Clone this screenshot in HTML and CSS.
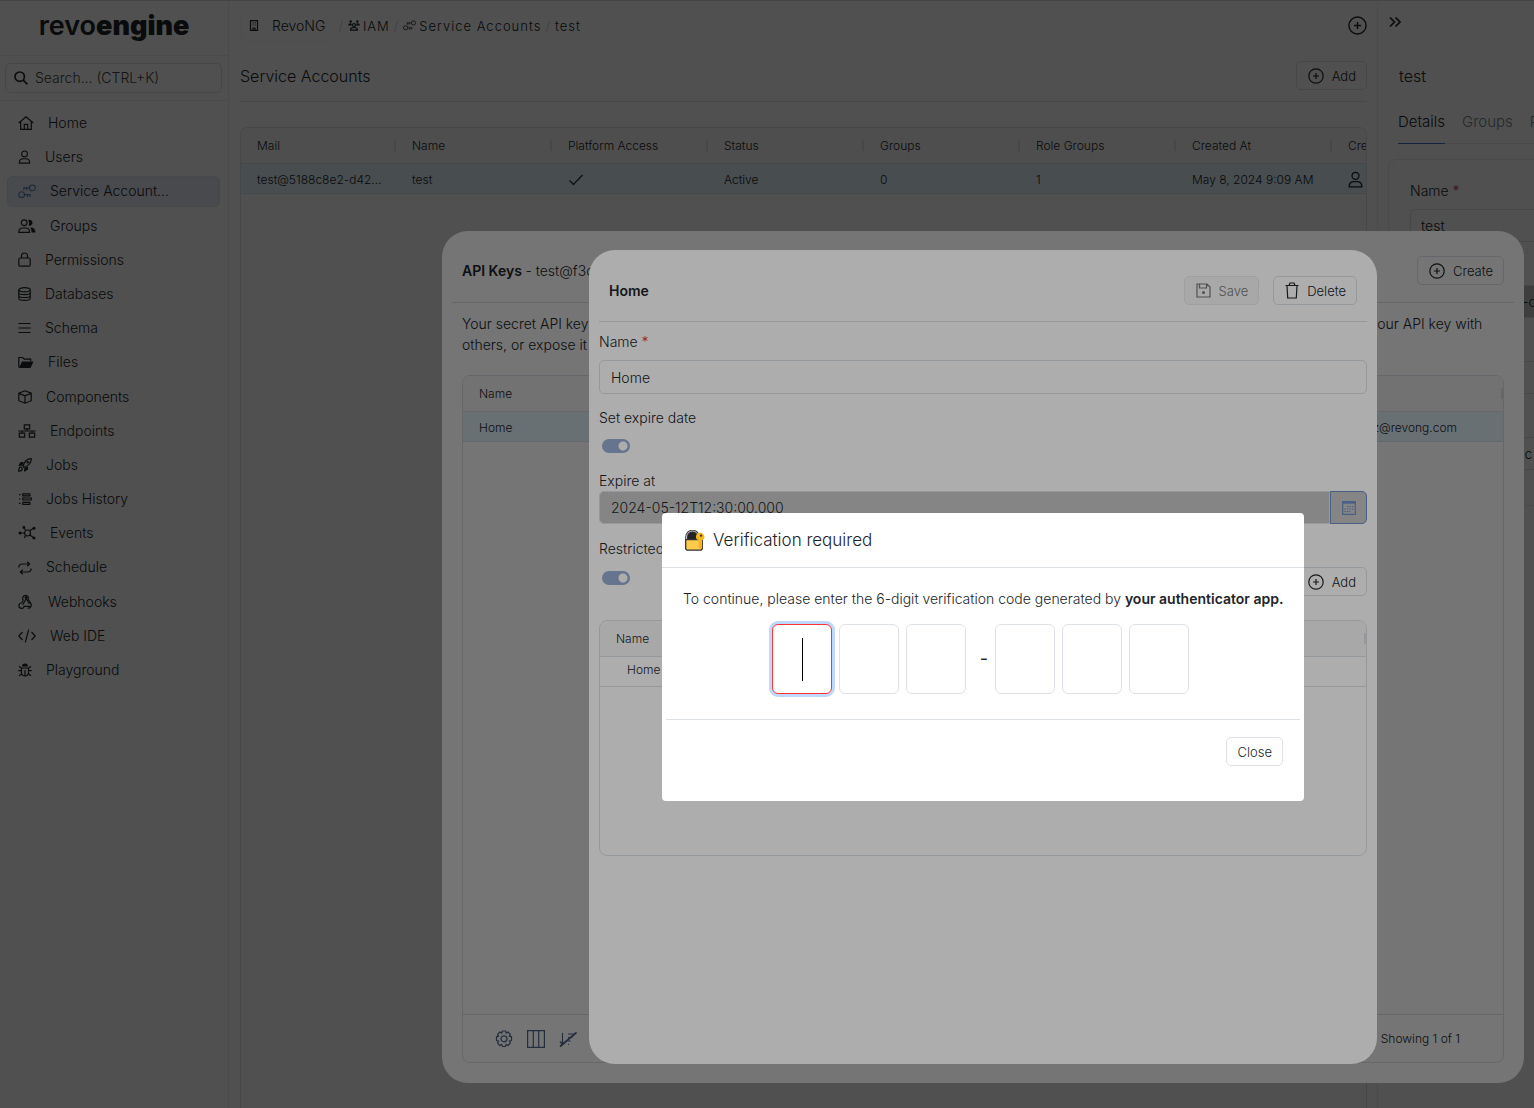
FILE: index.html
```html
<!DOCTYPE html>
<html lang="en">
<head>
<meta charset="utf-8">
<meta name="viewport" content="width=device-width, initial-scale=1">
<title>revoengine - Service Accounts</title>
<link rel="stylesheet" href="styles.css">
</head>
<body>
<svg class="sprite" aria-hidden="true">
  <symbol id="plus" viewBox="0 0 16 16"><circle cx="8" cy="8" r="7.2"/><path d="M8 5v6M5 8h6"/></symbol>
  <symbol id="user" viewBox="0 0 14 16"><circle cx="7" cy="4.5" r="3.3"/><path d="M1 15c0-3.200 1.800-5 4.500-5h3c2.700 0 4.500 1.800 4.500 5z"/></symbol>
  <symbol id="keys" viewBox="0 0 20 16"><circle cx="4" cy="11.500" r="3.200"/><path d="M7.200 11.500H14M10.500 11.500v3M13.500 11.500v2.500"/><circle cx="16" cy="4" r="3.200"/><path d="M12.800 4H6M6.500 4v3M9.500 4v2.500"/></symbol>
</svg>

<div class="app">
  <aside class="sidebar">
    <div class="logo">revo<b>engine</b></div>
    <div class="search-row">
      <label class="search">
        <svg width="14" height="14" viewBox="0 0 14 14" class="ico heavy"><circle cx="5.700" cy="5.700" r="4.700"/><path d="M9.200 9.200l4.200 4.200"/></svg>
        <input type="search" placeholder="Search... (CTRL+K)" aria-label="Search">
      </label>
    </div>
    <nav class="nav" aria-label="Main">
      <a href="#"><svg class="ico" width="16" height="14" viewBox="0 0 16 14"><path d="M.7 7L8 .8 15.300 7M2.700 5.500v7.800h10.600V5.500M6.300 13V8.300h3.400V13"/></svg>Home</a>
      <a href="#"><svg class="ico" width="13" height="14"><use href="#user"/></svg>Users</a>
      <a href="#" class="active" aria-current="page"><svg class="ico" width="18" height="15"><use href="#keys"/></svg>Service Account...</a>
      <a href="#"><svg class="ico" width="18" height="14" viewBox="0 0 18 14"><circle cx="6.200" cy="3.700" r="2.900"/><path d="M.8 13.300c0-2.800 1.500-4.300 4-4.300h2.800c2.500 0 4 1.500 4 4.300z"/><path class="fill" d="M10 .9c3-.8 4.500 1 4.500 2.900s-1.800 3.500-4 2.800c1-1.800.9-4-.5-5.700zM12 8.500c3.500-.2 5.500 1.700 5.500 5h-4c0-2-.5-3.700-1.500-5z"/></svg>Groups</a>
      <a href="#"><svg class="ico" width="13" height="15" viewBox="0 0 13 15"><rect x=".8" y="6" width="11.400" height="8.200" rx="1.500"/><path d="M3.500 6V4a3 3 0 016 0v2"/></svg>Permissions</a>
      <a href="#"><svg class="ico" width="13" height="14" viewBox="0 0 13 14"><ellipse cx="6.500" cy="2.800" rx="5.700" ry="2.100"/><path d="M.8 2.800v8.400c0 2.800 11.400 2.800 11.400 0V2.800M.8 5.600c0 2.800 11.400 2.800 11.400 0M.8 8.400c0 2.800 11.400 2.800 11.400 0"/></svg>Databases</a>
      <a href="#"><svg class="ico" width="13" height="12" viewBox="0 0 13 12"><path d="M.5 1.500h12M.5 6h12M.5 10.500h12"/></svg>Schema</a>
      <a href="#"><svg class="ico" width="16" height="13" viewBox="0 0 16 13"><path d="M.8 11.500V1.500h4l1.500 1.700h6.400v2"/><path class="fill" d="M4 5.500h11.500L12.500 12H1z"/></svg>Files</a>
      <a href="#"><svg class="ico" width="14" height="14" viewBox="0 0 14 14"><path d="M7 .8l6.200 2.400v7.500L7 13.200.8 10.700V3.200zM.8 3.400L7 5.800l6.200-2.400M7 5.800v7.200"/></svg>Components</a>
      <a href="#"><svg class="ico" width="18" height="14" viewBox="0 0 18 14"><path d="M6.300.8h5.400v4H6.300zM1.300 9.200h5.400v4H1.300zM11.300 9.200h5.400v4h-5.400zM9 5v2M.3 7h17.400M4 7v2M14 7v2"/></svg>Endpoints</a>
      <a href="#"><svg class="ico" width="14" height="14" viewBox="0 0 14 14"><path d="M5 8.500C6 4 8.500.8 13.300.7 13.300 5.500 10 8 5.700 9.300z"/><circle cx="9.700" cy="4.300" r=".7"/><path class="fill" d="M5.500 4H2.500L.3 8l4-.3zM10 8.500v3L6 14l.3-4.300z"/><path d="M1.500 9.500c1.500-1 3.500 1 2.500 2.500-.8.900-2 1.200-3.300 1.200 0-1.300 0-3 .8-3.700z"/></svg>Jobs</a>
      <a href="#"><svg class="ico" width="14" height="14" viewBox="0 0 14 14"><path d="M4.800 1.800h7v2h-7zM4.800 6h8.500v2H4.800zM4.800 10.300h7v2h-7zM1 2.700h1.500M1 7h1.500M1 11.300h1.500"/></svg>Jobs History</a>
      <a href="#"><svg class="ico" width="18" height="14" viewBox="0 0 18 14"><circle cx="9.500" cy="7" r="3"/><path d="M2 7h4.500M6 2l1.800 2.500M11.500 4.800L16 2M12 9l4 3M7.500 9.500L6.500 12"/><path class="fill" d="M.5 7a1.500 1.500 0 013 0 1.500 1.500 0 01-3 0zM4.500 1.500a1.400 1.400 0 012.800 0 1.400 1.400 0 01-2.800 0zM14.500 2.300a1.500 1.500 0 013 0 1.500 1.500 0 01-3 0zM14.500 12a1.500 1.500 0 013 0 1.500 1.500 0 01-3 0z"/></svg>Events</a>
      <a href="#"><svg class="ico" width="14" height="14" viewBox="0 0 14 14"><path d="M.8 6.500C.8 4 2.500 3 4.500 3h7M9.200.7L11.600 3 9.200 5.300M13.200 7.500c0 2.500-1.700 3.500-3.700 3.500h-7M4.800 8.700L2.400 11l2.400 2.300"/></svg>Schedule</a>
      <a href="#"><svg class="ico" width="16" height="14" viewBox="0 0 16 14"><path d="M5.400 5.500a3 3 0 115.200-2M8 3.500l3.300 5.200M8 3.500a.8.800 0 11.100 0L4.800 9.800"/><path d="M5.400 5.500L3.500 8a2.700 2.700 0 102.700 3.300h6M11.300 7.700a2.700 2.700 0 11-1.500 5.200M9.500 3.500l3.200 4.300"/></svg>Webhooks</a>
      <a href="#"><svg class="ico" width="18" height="14" viewBox="0 0 18 14"><path d="M4.500 3L.8 7l3.700 4M13.500 3l3.700 4-3.700 4M10.700.7L7.300 13.300"/></svg>Web IDE</a>
      <a href="#"><svg class="ico" width="14" height="14" viewBox="0 0 14 14"><path class="fill" d="M4 3.500a3 3 0 016 0z"/><path d="M3.500 5h7v4.500a3.500 3.500 0 01-7 0zM7 7v6M.3 7.700h3M10.700 7.700h3M1 3.300l2.500 2M13 3.300l-2.500 2M1 12.700l2.700-2M13 12.700l-2.700-2"/></svg>Playground</a>
    </nav>
  </aside>

  <main class="main">
    <header class="topbar">
      <nav class="crumbs" aria-label="Breadcrumb">
        <a href="#" class="tenant"><svg class="ico" width="10" height="11" viewBox="0 0 10 11"><path d="M1.500.6h7v9.800h-7zM4 10V8h2v2M3.500 2.800h1M5.700 2.800h1M3.500 5h1M5.700 5h1"/></svg>RevoNG</a>
        <span class="slash">/</span>
        <a href="#"><svg class="ico" width="12" height="11" viewBox="0 0 12 11"><path class="fill" d="M1.500 1.500a1.200 1.200 0 012.400 0 1.200 1.200 0 01-2.400 0zM8.100 1.500a1.200 1.200 0 012.400 0 1.200 1.200 0 01-2.400 0zM.2 5.500c0-2 1-2.300 3-2.300l.8 2.300zM11.800 5.500c0-2-1-2.300-3-2.300L8 5.500z"/><circle cx="6" cy="5" r="1.500"/><path d="M2.500 10.200c0-2 1-2.700 3.500-2.700s3.500.7 3.500 2.700z"/></svg>IAM</a>
        <span class="slash">/</span>
        <a href="#"><svg class="ico" width="13" height="11"><use href="#keys"/></svg>Service Accounts</a>
        <span class="slash">/</span>
        <a href="#">test</a>
      </nav>
      <button type="button" class="icon-btn" aria-label="New"><svg class="ico" width="19" height="19"><use href="#plus"/></svg></button>
    </header>
    <div class="page-head">
      <h1>Service Accounts</h1>
      <button type="button" class="btn"><svg class="ico" width="16" height="16"><use href="#plus"/></svg>Add</button>
    </div>
    <div class="grid-box accounts">
      <table class="grid">
        <thead><tr><th>Mail</th><th>Name</th><th>Platform Access</th><th>Status</th><th>Groups</th><th>Role Groups</th><th>Created At</th><th>Created By</th></tr></thead>
        <tbody><tr class="selected"><td>test@5188c8e2-d42...</td><td>test</td><td><svg class="ico" width="16" height="12" viewBox="0 0 16 12" role="img" aria-label="Yes"><path d="M1.500 6.500l4 4L14.500 1"/></svg></td><td>Active</td><td>0</td><td>1</td><td>May 8, 2024 9:09 AM</td><td><svg class="ico" width="15" height="17"><use href="#user"/></svg></td></tr></tbody>
      </table>
    </div>
  </main>

  <section class="panel" aria-label="Details">
    <button type="button" class="icon-btn collapse" aria-label="Collapse"><svg class="ico heavy" width="12" height="12" viewBox="0 0 12 12"><path d="M1 1.500L5.500 6 1 10.500M6.500 1.500L11 6l-4.500 4.500"/></svg></button>
    <h2>test</h2>
    <div class="tabs">
      <a href="#" class="current">Details</a><a href="#">Groups</a><a href="#">Permissions</a>
    </div>
    <div class="card">
      <label for="acc-name">Name <i>*</i></label>
      <input id="acc-name" class="field" value="test">
      <label for="acc-mail">Mail</label>
      <input id="acc-mail" class="field" value="test@5188c8e2-d42" disabled>
      <label for="acc-desc">Description</label>
      <input id="acc-desc" class="field">
      <label for="acc-key">Keys</label>
      <button type="button" id="acc-key" class="field">Rotate this public key</button>
    </div>
  </section>
</div>

<div class="overlay">
  <section class="dialog keys" role="dialog" aria-label="API Keys">
    <header class="dialog-head">
      <h2>API Keys <span>- test@f3c1</span></h2>
      <button type="button" class="btn"><svg class="ico" width="16" height="16"><use href="#plus"/></svg>Create</button>
    </header>
    <div class="keys-body">
      <p>Your secret API keys are listed below. Please note that we do not disclose your secret API keys again after you generate them. Do not share your API key with others, or expose it in the browser or other client-side code.</p>
      <div class="grid-box">
        <table class="grid wide">
          <thead><tr><th>Name</th><th>Created By</th></tr></thead>
          <tbody><tr class="selected"><td>Home</td><td class="mail">lukasz@revong.com</td></tr></tbody>
        </table>
        <footer class="grid-foot">
          <div class="tools">
            <button type="button" class="icon-btn" aria-label="Settings"><svg class="ico" width="18" height="18" viewBox="0 0 18 18"><path d="M7.300 1h3.400l.5 2 1.800-1 2.300 2.300-1 1.900 2.200.6v3.800l-2.200.5 1 2-2.300 2.300-1.900-1-.6 2.100H7.300l-.6-2.100-1.900 1-2.200-2.300 1-2-2.100-.5V6.800l2.100-.6-1-1.900L4.900 2l1.900 1z"/><circle cx="9" cy="8.800" r="3"/></svg></button>
            <button type="button" class="icon-btn" aria-label="Columns"><svg class="ico" width="18" height="18" viewBox="0 0 18 18"><path d="M.6.600h16.800v16.800H.6zM6.300.6v16.800M11.700.6v16.800"/></svg></button>
            <button type="button" class="icon-btn" aria-label="Clear sorting"><svg class="ico" width="18" height="18" viewBox="0 0 18 18"><path d="M3.500 3v11M1 11.500L3.500 14.500 6 12M9 4h7M9 7.500h4.500M9 11h2.500M9 14.500h1"/><path stroke-width="1.800" d="M1 16.500L17.500 2.500"/></svg></button>
          </div>
          <span>Showing 1 of 1</span>
        </footer>
      </div>
    </div>
  </section>
</div>

<div class="overlay">
  <section class="dialog edit" role="dialog" aria-label="Home">
    <header class="dialog-head">
      <h2>Home</h2>
      <div class="actions">
        <button type="button" class="btn" disabled><svg class="ico" width="15" height="15" viewBox="0 0 15 15"><path d="M1 1h10l3 3v10H1zM3.500 1v4h7V1"/><circle cx="7.500" cy="9.500" r="1.500" class="fill"/></svg>Save</button>
        <button type="button" class="btn"><svg class="ico" width="14" height="17" viewBox="0 0 14 17"><path d="M.5 3.500h13M4 3.500l1-2.500h4l1 2.500M2 3.500L2.700 16h8.600L12 3.500"/></svg>Delete</button>
      </div>
    </header>
    <form class="edit-form">
      <label for="key-name">Name <i>*</i></label>
      <input id="key-name" class="field" value="Home">
      <label for="has-expire">Set expire date</label>
      <input id="has-expire" class="switch" type="checkbox" checked>
      <label for="expire">Expire at</label>
      <div class="date">
        <input id="expire" class="field" value="2024-05-12T12:30:00.000" disabled>
        <button type="button" aria-label="Pick a date"><svg width="14" height="14" viewBox="0 0 14 14" class="ico"><path d="M.7.700h12.600v12.600H.7z"/><path class="fill" d="M.7.700h12.600v2H.7z"/><path class="dots" d="M5 5.500h7M2.500 8h9M2.500 10.500h6"/></svg></button>
      </div>
      <label for="restricted">Restricted access</label>
      <div class="restricted">
        <input id="restricted" class="switch" type="checkbox" checked>
        <button type="button" class="btn"><svg class="ico" width="16" height="16"><use href="#plus"/></svg>Add</button>
      </div>
      <div class="grid-box scopes">
        <table class="grid single">
          <thead><tr><th>Name</th></tr></thead>
          <tbody><tr><td class="indent">Home</td></tr></tbody>
        </table>
      </div>
    </form>
  </section>
</div>

<div class="overlay">
  <section class="modal" role="dialog" aria-modal="true" aria-labelledby="verify-title">
    <header>
      <svg width="21" height="21" viewBox="0 0 21 21" aria-hidden="true"><path d="M3 9.500V7a5.500 5.500 0 0111 0v2.500z" fill="#222"/><path d="M2.500 9V7a6 6 0 0112 0v2" fill="none" stroke="#333" stroke-width="2.600"/><path d="M2.500 9V7a6 6 0 0112 0v2" fill="none" stroke="#ccc" stroke-width="1"/><path d="M1.700 9.700h16.600v9.300l-1.300 1.200H3L1.700 19z" fill="#ffcb4c" stroke="#333" stroke-width="1.300"/><path d="M16 2.700c2.700 0 4.400 1.800 4.400 4 0 1.700-1 2.900-2.300 3.600v7.400l-1.900 1.300-1.600-1.500v-7.200c-1.600-.7-2.700-2-2.700-3.600 0-2.200 1.700-4 4.100-4z" fill="#f5b51e"/><circle cx="17" cy="5.700" r="1.100" fill="#333"/></svg>
      <h2 id="verify-title">Verification required</h2>
    </header>
    <div class="verify">
      <p>To continue, please enter the 6-digit verification code generated by <b>your authenticator app.</b></p>
      <div class="otp">
        <label class="focus"><input inputmode="numeric" maxlength="1" aria-label="Digit 1"></label>
        <label><input inputmode="numeric" maxlength="1" aria-label="Digit 2"></label>
        <label><input inputmode="numeric" maxlength="1" aria-label="Digit 3"></label>
        <span>-</span>
        <label><input inputmode="numeric" maxlength="1" aria-label="Digit 4"></label>
        <label><input inputmode="numeric" maxlength="1" aria-label="Digit 5"></label>
        <label><input inputmode="numeric" maxlength="1" aria-label="Digit 6"></label>
      </div>
    </div>
    <footer><button type="button" class="btn">Close</button></footer>
  </section>
</div>
</body>
</html>
```
FILE: styles.css
```css
:root {
  --text: #212529;
  --line: #dee2e6;
  --faint: #f0f0f2;
  --accent: #6d8cc4;
}
* { box-sizing: border-box; }
body {
  margin: 0;
  height: 100vh;
  overflow: hidden;
  font: 300 14px/20px Inter, sans-serif;
  color: var(--text);
  background: #fff;
}
h1, h2, p { margin: 0; font-weight: inherit; }
a { color: inherit; text-decoration: none; }
button, input { font: inherit; color: inherit; }
button { cursor: pointer; }
label i { color: #dc3545; font-style: normal; }

.sprite { display: none; }
.ico { flex: none; fill: none; stroke: currentColor; stroke-width: 1.2; }
.ico .fill { fill: currentColor; stroke: none; }
.ico.heavy { stroke-width: 1.7; }
.icon-btn { display: flex; padding: 0; border: 0; background: none; }
.btn {
  display: inline-flex;
  align-items: center;
  gap: 8px;
  height: 29px;
  padding: 0 10px 0 11px;
  border: 1px solid var(--line);
  border-radius: 5px;
  background: none;
  font-size: 13px;
}
.btn:disabled { color: #777; background: #f8f8f8; border-color: #ebebeb; }

/* Application shell */
.app {
  display: grid;
  grid-template-columns: 229px minmax(0, 1fr) 157px;
  height: 100%;
  border-top: 1px solid #d8d8d8;
}
.sidebar { border-right: 1px solid var(--faint); }
.logo {
  height: 55px;
  padding-top: 9px;
  border-bottom: 1px solid var(--faint);
  font-size: 27px;
  line-height: 32px;
  font-weight: 600;
  text-align: center;
}
.search-row { padding: 7px 6px 7px 5px; border-bottom: 1px solid var(--faint); }
.search {
  display: flex;
  align-items: center;
  gap: 7px;
  height: 30px;
  padding: 0 8px;
  border: 1px solid var(--line);
  border-radius: 5px;
}
.search input { flex: 1; min-width: 0; padding: 0; border: 0; outline: 0; background: none; }
.search input::placeholder { color: #444; }
.nav { display: flex; flex-direction: column; gap: 4px; padding: 7px 8px 7px 7px; line-height: 1.3; }
.nav a { display: flex; align-items: center; gap: 14px; padding: 5px 10px; border: 1px solid transparent; border-radius: 5px; }
.nav a.active { background: #e8ecf8; border-color: #e0e4f0; }
.nav a.active svg { color: #5b83b8; }

.main { display: flex; flex-direction: column; padding: 0 10px 0 11px; min-width: 0; }
.topbar { display: flex; justify-content: space-between; align-items: center; height: 49px; }
.crumbs { display: flex; align-items: center; gap: 4px; font-size: 13px; letter-spacing: 1px; }
.crumbs a { display: flex; align-items: center; gap: 3px; }
.crumbs .tenant { gap: 13px; padding: 4px 8px; border: 1px solid #f8f8f8; border-radius: 8px; font-size: 14px; letter-spacing: 0; }
.slash { color: #ccc; }
.page-head { display: flex; justify-content: space-between; align-items: center; height: 52px; border-bottom: 1px solid var(--line); }
h1, .panel h2 { font-size: 16px; }

/* Data grids */
.grid-box { display: flex; flex-direction: column; border: 1px solid var(--line); border-radius: 8px; overflow: hidden; }
.accounts { flex: 1; margin-top: 25px; border-bottom: 0; border-radius: 8px 8px 0 0; }
.grid { width: 1247px; table-layout: fixed; border-collapse: separate; border-spacing: 0; font-size: 12px; }
.accounts th:first-child { width: 155px; }
.grid.wide, .grid.single { width: 100%; }
.grid th, .grid td { padding: 0 0 0 16px; text-align: left; font-weight: inherit; white-space: nowrap; border-bottom: 1px solid var(--line); }
.grid th { position: relative; height: 36px; background: #f8f8f8; }
.grid th::after { content: ""; position: absolute; right: 0; top: 12px; width: 2px; height: 11px; background: var(--line); }
.grid td { height: 30px; padding-top: 2px; }
.grid td svg { display: block; }
.grid .selected { background: #e5f4fd; }
.grid .indent { padding: 0 0 3px 27px; }
.grid .mail { text-align: right; padding-right: 46px; }
.wide th:first-child::after { display: none; }

/* Details panel */
.panel { border-left: 1px solid var(--faint); overflow: hidden; padding-left: 10px; white-space: nowrap; }
.collapse { padding: 15px 1px; }
.panel h2 { padding: 21px 11px 0; line-height: 24px; }
.tabs { display: flex; gap: 17px; width: 300px; margin-left: 10px; padding-top: 24px; border-bottom: 1px solid #e8e8e8; color: #7a8291; font-size: 15px; }
.tabs a { padding: 0 0 11px; margin-bottom: -1px; border-bottom: 1px solid transparent; }
.tabs .current { color: var(--text); border-color: #4070d0; }
.card { display: flex; flex-direction: column; width: 300px; margin-top: 15px; padding: 21px 21px 35px; border: 1px solid #ececec; border-radius: 8px; }
.card label:not(:first-child) { margin-top: 15px; }
.field { width: 100%; height: 34px; padding: 0 11px; border: 1px solid var(--line); border-radius: 5px; background: none; text-align: left; }
.field:disabled { background: #c5c5c5; color: inherit; }
.card .field { flex: none; height: 33px; margin-top: 8px; padding: 0 10px; }

/* Stacked dialogs: every layer dims what lies below */
.overlay {
  position: fixed;
  inset: 0;
  display: flex;
  align-items: center;
  justify-content: center;
  padding: 206px 0 0 432px;
  background: rgba(0, 0, 0, .32);
}
.dialog { display: flex; flex-direction: column; padding: 0 10px; background: #fff; border-radius: 26px; }
.dialog.keys { width: calc(100% - 20px); height: calc(100% - 50px); padding-bottom: 20px; }
.dialog.edit { width: 788px; height: calc(100% - 88px); }
.dialog-head { display: flex; justify-content: space-between; align-items: center; height: 72px; padding: 8px 10px 0; border-bottom: 1px solid var(--line); }
.dialog-head h2 { font-size: 14px; font-weight: 600; }
.dialog-head h2 span { font-weight: 300; }
.actions { display: flex; gap: 14px; }
.edit .dialog-head { padding-top: 10px; }

.keys-body { flex: 1; display: flex; flex-direction: column; padding: 10px 10px 0; }
.keys-body p { line-height: 21px; }
.keys-body .grid-box { flex: 1; margin-top: 20px; }
.grid-foot { display: flex; justify-content: space-between; align-items: center; height: 48px; margin-top: auto; padding: 0 43px 0 32px; border-top: 1px solid var(--line); font-size: 12px; }
.tools { display: flex; gap: 14px; color: #4e6488; }

.edit-form { display: flex; flex-direction: column; padding-top: 10px; }
.edit-form .field { margin-top: 8px; }
.edit-form label:not(:first-child) { margin-top: 14px; }
.switch { appearance: none; width: 28px; height: 14px; margin: 11px 3px; border-radius: 7px; background: radial-gradient(circle at 21px 7px, #fff 4px, #97acd4 5px); }
.edit-form label:nth-of-type(n + 3) { margin-top: 7px; }
.edit-form .date { display: flex; }
.edit-form .date .field { height: 33px; margin: 0; border-radius: 5px 0 0 5px; }
.date button { display: grid; place-items: center; width: 37px; flex: none; border: 1px solid var(--accent); border-radius: 0 5px 5px 0; background: #c5c5c5; color: var(--accent); }
.dots { stroke-dasharray: 1.5 1; }
.edit-form .date + label { margin-top: 15px; }
.restricted { display: flex; justify-content: space-between; align-items: flex-start; margin-top: 8px; }
.restricted .switch { margin: 4px 3px; }
.scopes { height: 236px; margin-top: 24px; }

/* Verification modal */
.modal { width: 642px; background: #fff; border-radius: 4px; }
.modal header { display: flex; align-items: center; gap: 8px; height: 55px; padding: 0 22px; border-bottom: 1px solid var(--line); }
.modal h2 { font-size: 17px; }
.verify { margin: 0 4px; padding: 21px 17px 25px; border-bottom: 1px solid var(--line); text-align: center; }
.verify p { white-space: nowrap; }
.verify b { font-weight: 600; }
.otp { display: flex; justify-content: center; align-items: center; gap: 7px; margin-top: 15px; padding-right: 5px; }
.otp label { position: relative; }
.otp input { display: block; width: 60px; height: 70px; padding: 0; border: 1px solid var(--line); border-radius: 6px; text-align: center; font-size: 36px; }
.otp .focus input { border-color: #f33; box-shadow: 0 0 0 3px #bfd8ff; }
.otp .focus::after { content: ""; position: absolute; left: 30px; top: 14px; width: 1px; height: 43px; background: #000; }
.otp span { width: 15px; font-size: 18px; font-weight: 400; text-align: right; }
.modal footer { display: flex; justify-content: flex-end; padding: 17px 21px 35px; }
```
